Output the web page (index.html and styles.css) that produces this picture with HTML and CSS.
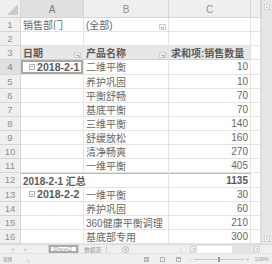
FILE: index.html
```html
<!DOCTYPE html>
<html>
<head>
<meta charset="utf-8">
<link rel="stylesheet" href="styles.css">
</head>
<body>
<div class="app">
  <div class="main">
    <div class="sheet">
      <div class="hd corner"><span class="tri"></span></div>
      <div class="hd col sel">A</div>
      <div class="hd col">B</div>
      <div class="hd col">C</div>
      <div class="hd col"></div>

      <div class="hd rn">1</div>
      <div class="c">销售部门</div>
      <div class="c">(全部)<span class="fbtn"><svg width="5" height="5" viewBox="0 0 5 5"><path d="M1 2l1.5 1.5L4 2" fill="none" stroke="#777" stroke-width="0.8"/></svg></span></div>
      <div class="c"></div>
      <div class="c"></div>

      <div class="hd rn">2</div>
      <div class="c"></div><div class="c"></div><div class="c"></div><div class="c"></div>

      <div class="hd rn">3</div>
      <div class="c th b">日期<span class="fbtn"><svg width="5" height="5" viewBox="0 0 5 5"><path d="M1 1.5l1.2 1.2L3.4 1.5M4 2v2.5" fill="none" stroke="#777" stroke-width="0.8"/></svg></span></div>
      <div class="c th b">产品名称<span class="fbtn"><svg width="5" height="5" viewBox="0 0 5 5"><path d="M1 1.5l1.2 1.2L3.4 1.5M4 2v2.5" fill="none" stroke="#777" stroke-width="0.8"/></svg></span></div>
      <div class="c th b">求和项:销售数量</div>
      <div class="c"></div>

      <div class="hd rn sel">4</div>
      <div class="c b grp active"><span class="minus"></span>2018-2-1</div>
      <div class="c">二维平衡</div>
      <div class="c n">10</div>
      <div class="c"></div>

      <div class="hd rn">5</div>
      <div class="c"></div><div class="c">养护巩固</div><div class="c n">10</div><div class="c"></div>

      <div class="hd rn">6</div>
      <div class="c"></div><div class="c">平衡舒畅</div><div class="c n">70</div><div class="c"></div>

      <div class="hd rn">7</div>
      <div class="c"></div><div class="c">基底平衡</div><div class="c n">70</div><div class="c"></div>

      <div class="hd rn">8</div>
      <div class="c"></div><div class="c">三维平衡</div><div class="c n">140</div><div class="c"></div>

      <div class="hd rn">9</div>
      <div class="c"></div><div class="c">舒缓放松</div><div class="c n">160</div><div class="c"></div>

      <div class="hd rn">10</div>
      <div class="c"></div><div class="c">清净畅爽</div><div class="c n">270</div><div class="c"></div>

      <div class="hd rn">11</div>
      <div class="c"></div><div class="c">一维平衡</div><div class="c n">405</div><div class="c"></div>

      <div class="hd rn">12</div>
      <div class="c b span2 tot">2018-2-1 汇总</div>
      <div class="c n b tot">1135</div>
      <div class="c"></div>

      <div class="hd rn">13</div>
      <div class="c b grp"><span class="minus"></span>2018-2-2</div>
      <div class="c">一维平衡</div>
      <div class="c n">30</div>
      <div class="c"></div>

      <div class="hd rn">14</div>
      <div class="c"></div><div class="c">养护巩固</div><div class="c n">60</div><div class="c"></div>

      <div class="hd rn">15</div>
      <div class="c"></div><div class="c">360健康平衡调理</div><div class="c n">210</div><div class="c"></div>

      <div class="hd rn">16</div>
      <div class="c"></div><div class="c">基底部专用</div><div class="c n">300</div><div class="c"></div>
    </div>
    <div class="vscroll">
      <span class="sbtn"><svg width="5" height="5" viewBox="0 0 5 5"><path d="M1 3.2l1.5-1.5L4 3.2z" fill="#888"/></svg></span>
      <span class="sbtn"><svg width="5" height="5" viewBox="0 0 5 5"><path d="M1 1.8l1.5 1.5L4 1.8z" fill="#888"/></svg></span>
    </div>
  </div>
  <div class="tabbar">
    <span class="nav first">◂</span>
    <span class="nav">▸</span>
    <span class="tab active">Sheet2</span>
    <span class="tab src">数据源</span>
    <span class="addtab">+</span>
    <span class="split">⋮</span>
    <div class="hscroll">
      <span class="hbtn"><svg width="4" height="5" viewBox="0 0 4 5"><path d="M3 1L1 2.5L3 4z" fill="#888"/></svg></span>
      <span class="thumb"></span>
      <span class="hbtn end"><svg width="4" height="5" viewBox="0 0 4 5"><path d="M1 1L3 2.5L1 4z" fill="#888"/></svg></span>
    </div>
    <span class="vbot"></span>
  </div>
  <div class="status">
    <span class="st">就绪</span>
    <span class="st ico">㇏</span>
    <span class="views">
      <span class="vi v1"></span>
      <span class="vi v2"></span>
      <span class="vi v3"></span>
    </span>
    <span class="zoom">
      <span class="zm">-</span>
      <span class="ztrack"><span class="zthumb"></span></span>
      <span class="zm">+</span>
    </span>
    <span class="pct">100%</span>
  </div>
</div>
</body>
</html>
```
FILE: styles.css
```css
* { box-sizing: border-box; }
html, body { margin: 0; padding: 0; background: #fff; }
body { width: 272px; height: 264px; overflow: hidden; font-family: "Liberation Sans", "Noto Sans CJK SC", sans-serif; }
.app { width: 272px; height: 264px; display: flex; flex-direction: column; }
.main { display: flex; height: 244px; }
.sheet {
  display: grid;
  grid-template-columns: 21px 63px 85px 82px 10px;
  grid-template-rows: 18px repeat(16, 14.125px);
  width: 261px;
}
.hd {
  background: #efefef;
  color: #909090;
  font-size: 10px;
  border-right: 1px solid #d6d6d6;
  border-bottom: 1px solid #d6d6d6;
  display: flex;
  align-items: center;
  justify-content: center;
}
.hd.sel { background: #e0e0e0; color: #7a7a7a; }
.hd.col { padding-top: 2px; }
.corner { position: relative; }
.tri {
  position: absolute; right: 2px; bottom: 2px;
  width: 0; height: 0;
  border-left: 11px solid transparent;
  border-bottom: 11px solid #cbcbcb;
}
.rn { font-size: 9.5px; }
.c {
  border-right: 1px solid #e4e4e4;
  border-bottom: 1px solid #e4e4e4;
  font-size: 10px;
  color: #666;
  display: flex;
  align-items: center;
  padding: 0 2px;
  white-space: nowrap;
  position: relative;
}
.b { font-weight: bold; color: #5a5a5a; }
.n { justify-content: flex-end; }
.th { background: #e7e7e7; border-bottom-color: #d0d0d0; }
.span2 { grid-column: span 2; }
.tot { border-top: 1px solid #b8b8b8; }
.grp { padding-left: 8px; font-size: 10.6px; }
.active { box-shadow: inset 0 0 0 2px #a8a8a8; }
.minus {
  width: 6px; height: 6px;
  border: 1px solid #b3b3b3;
  margin-right: 2px;
  position: relative;
  flex: none;
}
.minus::after {
  content: ""; position: absolute; left: 1px; right: 1px; top: 1.5px; height: 1px; background: #9c9c9c;
}
.fbtn {
  margin-left: auto;
  width: 7px; height: 6px;
  border: 1px solid #d0d0d0;
  background: #f6f6f6;
  display: flex; align-items: center; justify-content: center;
  align-self: flex-end;
  margin-bottom: 1px;
}
.fbtn svg { display: block; }
.vscroll {
  width: 11px;
  background: #e6e6e6;
  border-left: 1px solid #d8d8d8;
  display: flex;
  flex-direction: column;
  justify-content: space-between;
  align-items: center;
  padding: 4px 0 2px;
}
.sbtn {
  width: 6px; height: 6px;
  background: #fafafa;
  border: 1px solid #d0d0d0;
  display: flex; align-items: center; justify-content: center;
}
.sbtn svg { display: block; width: 4px; height: 4px; }
.tabbar {
  height: 10px;
  background: #efefef;
  border-top: 1px solid #dcdcdc;
  border-bottom: 1px solid #e2e2e2;
  display: flex;
  align-items: center;
  font-size: 6px;
  color: #9a9a9a;
}
.nav { width: 13px; text-align: center; font-size: 5px; color: #c4c4c4; }
.nav.first { margin-left: 6px; }
.tab {
  height: 100%;
  display: flex; align-items: center;
  border-right: 1px solid #d4d4d4;
}
.tab.active {
  background: #fff;
  margin-left: 16px;
  padding: 0 6px 0 4px;
  border-left: 1px solid #d4d4d4;
  color: #a3a3a3;
  font-size: 6px;
}
.tab.src { padding: 0 5px 0 5px; font-size: 5.7px; }
.addtab {
  width: 7px; height: 7px; border-radius: 50%;
  border: 1px solid #b9b9b9;
  font-size: 6px; line-height: 5px; text-align: center;
  color: #999;
  margin-left: 15px;
}
.split { margin-left: 48px; font-size: 6px; color: #bbb; width: 8px; text-align: center; }
.hscroll {
  display: flex; align-items: center;
  height: 8px;
  width: 70px;
  margin-left: 5px;
  background: #e4e4e4;
}
.hbtn {
  width: 6px; height: 6px; background: #fafafa; border: 1px solid #d2d2d2;
  display: flex; align-items: center; justify-content: center;
  flex: none;
}
.hbtn svg { display: block; width: 3px; height: 4px; }
.hbtn.end { margin-left: auto; }
.thumb { width: 35px; height: 7px; background: #fff; margin-left: 1px; }
.vbot { flex: 1; }
.status {
  height: 10px;
  background: #efefef;
  display: flex;
  align-items: center;
  font-size: 4.5px;
  color: #8a8a8a;
}
.st { margin-left: 3px; }
.st.ico { margin-left: 14px; font-size: 5px; }
.views { display: flex; margin-left: 113px; align-items: center; }
.vi { width: 5px; height: 5px; border: 1px solid #b3b3b3; margin-right: 11px; }
.v1 { background: repeating-linear-gradient(#b3b3b3 0 1px, #efefef 1px 2px); }
.v2 { border-left-width: 1.5px; border-right-width: 1.5px; }
.v3 { border-top-width: 2px; }
.zoom { display: flex; align-items: center; margin-left: -2px; }
.zm { font-size: 6px; color: #aaa; }
.ztrack { width: 50px; height: 1px; background: #c7c7c7; margin: 0 2px; position: relative; }
.zthumb { position: absolute; left: 24px; top: -2px; width: 2px; height: 5px; background: #9a9a9a; }
.pct { margin-left: 5px; font-size: 5.6px; color: #999; }
```
